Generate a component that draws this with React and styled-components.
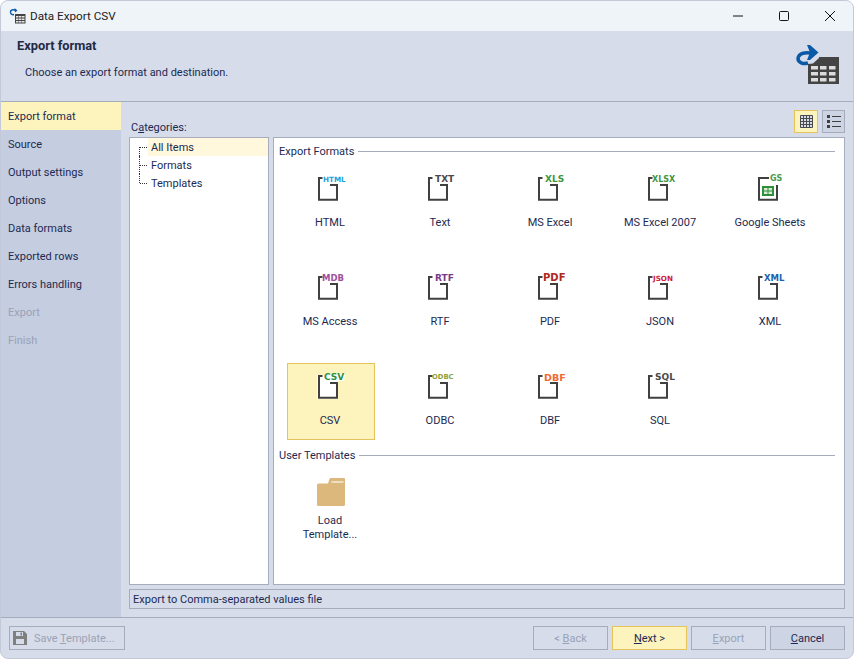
import React from "react";
import styled, { createGlobalStyle } from "styled-components";

const GlobalStyle = createGlobalStyle`
  html, body {
    margin: 0;
    padding: 0;
    background: #fff;
  }
  body {
    font-family: Roboto, "Open Sans", sans-serif;
    font-size: 11px;
    color: #1c2a52;
  }
  * { box-sizing: border-box; }
`;

const Window = styled.div`
  width: 854px;
  height: 659px;
  display: flex;
  flex-direction: column;
  border: 1px solid #c3c9d8;
  border-radius: 8px;
  overflow: hidden;
  background: #d6dce9;
`;

const TitleBar = styled.div`
  height: 30px;
  flex: none;
  display: flex;
  align-items: center;
  padding-left: 8px;
  background: #eff4f9;
  color: #222;
  font-size: 11.7px;
  gap: 4px;
`;

const TitleText = styled.span`
  flex: 1;
`;

const WinControls = styled.div`
  display: flex;
`;

const WinButton = styled.div`
  width: 46px;
  height: 30px;
  display: flex;
  align-items: center;
  justify-content: center;
`;

const Header = styled.div`
  height: 71px;
  flex: none;
  display: flex;
  justify-content: space-between;
  padding: 7px 14px 0 16px;
  border-bottom: 1px solid #a5adbd;
`;

const HeaderTitle = styled.div`
  font-weight: 700;
  font-size: 12.8px;
  line-height: 16px;
  color: #1f2a44;
`;

const HeaderDesc = styled.div`
  margin: 11px 0 0 8px;
  line-height: 16px;
`;

const HeaderIcon = styled.svg`
  margin-top: 7px;
`;

const Body = styled.div`
  flex: 1;
  display: flex;
  min-height: 0;
`;

const Nav = styled.div`
  width: 120px;
  flex: none;
  background: #c5cde0;
`;

const NavItem = styled.div`
  height: 28px;
  line-height: 28px;
  padding: 1px 0 0 7px;
  background: ${(p) => (p.$active ? "#fdf3bd" : "transparent")};
  color: ${(p) => (p.$disabled ? "#9aa2b6" : "#1c2a52")};
`;

const Content = styled.div`
  flex: 1;
  display: flex;
  flex-direction: column;
  padding: 8px;
  min-width: 0;
`;

const Toolbar = styled.div`
  height: 24px;
  flex: none;
  display: flex;
  align-items: flex-start;
  gap: 4px;
  margin-bottom: 3px;
`;

const CategoriesLabel = styled.span`
  flex: 1;
  align-self: flex-end;
  padding-left: 2px;
  line-height: 16px;
  margin-bottom: -2px;
`;

const ToggleButton = styled.div`
  width: ${(p) => (p.$active ? 24 : 23)}px;
  height: 23px;
  display: flex;
  align-items: center;
  justify-content: center;
  border: 1px solid ${(p) => (p.$active ? "#e6c35c" : "#a5adbd")};
  background: ${(p) => (p.$active ? "#fdf3bd" : "#cdd4e4")};
`;

const Panels = styled.div`
  flex: 1;
  display: flex;
  gap: 4px;
  min-height: 0;
`;

const TreeBox = styled.div`
  width: 140px;
  flex: none;
  background: #fff;
  border: 1px solid #a5adbd;
`;

const TreeRow = styled.div`
  height: 18px;
  display: flex;
  align-items: center;
  padding-left: 9px;
`;

const Connector = styled.span`
  position: relative;
  width: 9px;
  height: 18px;
  flex: none;

  &::before {
    content: "";
    position: absolute;
    left: 0;
    top: ${(p) => (p.$first ? "9px" : "0")};
    height: ${(p) => (p.$first || p.$last ? "9px" : "18px")};
    border-left: 1px dotted #333;
  }

  &::after {
    content: "";
    position: absolute;
    left: 1px;
    top: 9px;
    width: 7px;
    border-top: 1px dotted #333;
  }
`;

const TreeLabel = styled.span`
  flex: 1;
  height: 18px;
  line-height: 18px;
  padding: 1px 0 0 3px;
  background: ${(p) => (p.$active ? "#fff8dd" : "transparent")};
`;

const MainBox = styled.div`
  flex: 1;
  background: #fff;
  border: 1px solid #a5adbd;
  padding: 5px 9px 0 5px;
  min-width: 0;
`;

const SectionHead = styled.div`
  height: 16px;
  display: flex;
  align-items: center;
  gap: 4px;

  &::after {
    content: "";
    flex: 1;
    height: 1px;
    background: #a5adbd;
  }
`;

const SectionText = styled.span`
  line-height: 14px;
  margin-top: 2px;
`;

const FormatGrid = styled.div`
  display: grid;
  grid-template-columns: repeat(5, 88px);
  column-gap: 22px;
  row-gap: 22px;
  padding: 6px 0 7px 8px;
`;

const TemplateGrid = styled(FormatGrid)`
  padding-top: 3px;
`;

const Cell = styled.div`
  height: 77px;
  display: flex;
  flex-direction: column;
  align-items: center;
  padding-top: ${(p) => p.$top ?? 10}px;
  border: 1px solid ${(p) => (p.$selected ? "#e6c35c" : "transparent")};
  background: ${(p) => (p.$selected ? "#fdf3bd" : "transparent")};
`;

const CellLabel = styled.div`
  margin: 14px 2px 0 0;
  line-height: 14px;
  text-align: center;
  white-space: pre-line;
`;

const DocWrap = styled.div`
  position: relative;
  width: 28px;
  height: 26px;
  flex: none;
`;

const Badge = styled.span`
  position: absolute;
  top: ${(p) => p.$top ?? -2}px;
  left: ${(p) => p.$left}px;
  font-family: "DejaVu Sans", sans-serif;
  font-weight: 700;
  font-size: ${(p) => p.$size}px;
  line-height: 11px;
  color: ${(p) => p.$color};
  white-space: nowrap;
`;

const FolderSvg = styled.svg`
  flex: none;
  margin-bottom: -6px;
`;

const StatusBar = styled.div`
  height: 20px;
  flex: none;
  margin-top: 4px;
  padding-left: 3px;
  line-height: 20px;
  border: 1px solid #a5adbd;
`;

const Footer = styled.div`
  height: 41px;
  flex: none;
  display: flex;
  align-items: flex-start;
  gap: 4px;
  padding: 8px 8px 0 8px;
  border-top: 1px solid #a5adbd;
`;

const FooterButton = styled.div`
  width: ${(p) => p.$width || 75}px;
  height: 24px;
  display: flex;
  align-items: center;
  justify-content: ${(p) => (p.$leading ? "flex-start" : "center")};
  padding-left: ${(p) => (p.$leading ? 3 : 0)}px;
  gap: 7px;
  border: 1px solid ${(p) => (p.$primary ? "#e6c35c" : "#a5adbd")};
  background: ${(p) =>
    p.$primary ? "#fdf3bd" : p.$disabled ? "transparent" : "#cdd4e4"};
  color: ${(p) => (p.$disabled ? "#9aa2b6" : "#1c2a52")};
`;

const Spacer = styled.div`
  flex: 1;
`;

const DocIcon = ({ ext, color, size, left, top, halo }) => (
  <DocWrap>
    <svg width="28" height="26" viewBox="0 0 28 26">
      {halo && <path d="M0 1h7l1-3h20l-1 9h-6v18H0z" fill="#fff" />}
      <path
        d="M5.500 2H2v21.700h18V9h-7"
        fill="none"
        stroke="#404040"
        strokeWidth="2"
      />
    </svg>
    <Badge $left={left} $top={top} $size={size} $color={color}>
      {ext}
    </Badge>
  </DocWrap>
);

const SheetIcon = () => (
  <DocWrap>
    <svg width="28" height="26" viewBox="0 0 28 26">
      <path
        d="M12 2H2v21.700h18V9"
        fill="none"
        stroke="#404040"
        strokeWidth="2"
      />
      <path fill="#2f8f3a" d="M5 10h12v10H5z" />
      <path fill="#d8ecd8" d="M7 12h3.500v2.500H7zM11.500 12H15v2.500h-3.500zM7 15.500h3.500V18H7zM11.500 15.500H15V18h-3.500z" />
    </svg>
    <Badge $left={13} $top={-3} $size={8} $color="#4a9a4a">
      GS
    </Badge>
  </DocWrap>
);

const FolderIcon = () => (
  <FolderSvg width="28" height="28" viewBox="0 0 28 28">
    <path
      fill="#dcb87d"
      d="M1.500 5.500H11l1.500-4.500a1 1 0 0 1 1-1H27a1 1 0 0 1 1 1V26.500a1.500 1.500 0 0 1-1.500 1.500h-25A1.500 1.500 0 0 1 0 26.500V7a1.500 1.500 0 0 1 1.500-1.500z"
    />
    <path stroke="#f6ecd8" strokeWidth="1.500" d="M14.500 4h12" fill="none" />
  </FolderSvg>
);

const GridGlyph = () => (
  <svg width="13" height="13" viewBox="0 0 13 13">
    <path fill="#d6dce9" d="M0 0h13v13H0z" />
    <path
      fill="none"
      stroke="#4a4a4a"
      strokeWidth="1"
      d="M.5.500h12v12H.5zM.5 3.500h12M.5 6.500h12M.5 9.500h12M3.500.5v12M6.500.5v12M9.500.5v12"
    />
  </svg>
);

const ListGlyph = () => (
  <svg width="14" height="13" viewBox="0 0 14 13">
    <path
      fill="#404040"
      d="M0 0h3v3H0zM0 5h3v3H0zM0 10h3v3H0zM5 1h9v1H5zM5 6h9v1H5zM5 11h9v1H5z"
    />
  </svg>
);

const TableBadge = () => (
  <svg width="17" height="16" viewBox="0 0 17 16">
    <path
      d="M7 2.500C4 1 1 2 1.500 4.500 2 6.500 3.500 7 5 6.500"
      fill="none"
      stroke="#0a5aa8"
      strokeWidth="1.400"
    />
    <path fill="#0a5aa8" d="M5.500 0l3 2.500-2.500 2z" />
    <path fill="#444" d="M6 6h10.500v9.500H6z" />
    <path
      fill="#e8e8e8"
      d="M7 8h2.500v1.500H7zM10 8h2.500v1.500H10zM13 8h2.500v1.500H13zM7 10.500h2.500V12H7zM10 10.500h2.500V12H10zM13 10.500h2.500V12H13zM7 13h2.500v1.500H7zM10 13h2.500v1.500H10zM13 13h2.500v1.500H13z"
    />
  </svg>
);

const ExportTableIcon = () => (
  <HeaderIcon width="43" height="40" viewBox="0 0 43 40">
    <path
      d="M18 9C10 6.500 2.500 8 2 13.500 2 17.500 7 19.500 12 18"
      fill="none"
      stroke="#0a5aa8"
      strokeWidth="3.500"
    />
    <path fill="#0a5aa8" d="M11 0h3l8.500 7.500L14 15h-3l3-7.500z" />
    <path fill="#444" d="M12 19l5-.5 6-5.500v-1h20v27H12z" />
    <path
      fill="#dcdcdc"
      d="M15 21h7v3.500h-7zM24 21h6.500v3.500H24zM33 21h6.500v3.500H33zM15 27h7v3.500h-7zM24 27h6.500v3.500H24zM33 27h6.500v3.500H33zM15 33h7v3.500h-7zM24 33h6.500v3.500H24zM33 33h6.500v3.500H33z"
    />
  </HeaderIcon>
);

const navItems = [
  { label: "Export format", active: true },
  { label: "Source" },
  { label: "Output settings" },
  { label: "Options" },
  { label: "Data formats" },
  { label: "Exported rows" },
  { label: "Errors handling" },
  { label: "Export", disabled: true },
  { label: "Finish", disabled: true },
];

const formats = [
  { label: "HTML", ext: "HTML", color: "#1f9fdc", size: 7.2, left: 6 },
  { label: "Text", ext: "TXT", color: "#4a4a4a", size: 9, left: 8 },
  { label: "MS Excel", ext: "XLS", color: "#3f9645", size: 9, left: 8 },
  { label: "MS Excel 2007", ext: "XLSX", color: "#3f9645", size: 8, left: 5 },
  { label: "Google Sheets", sheet: true },
  { label: "MS Access", ext: "MDB", color: "#a0509a", size: 8.5, left: 5 },
  { label: "RTF", ext: "RTF", color: "#7a3a8c", size: 9, left: 8 },
  { label: "PDF", ext: "PDF", color: "#b0281c", size: 10, left: 6, top: -3 },
  { label: "JSON", ext: "JSON", color: "#d0203c", size: 7.2, left: 6 },
  { label: "XML", ext: "XML", color: "#1a62ae", size: 8.5, left: 7 },
  { label: "CSV", ext: "CSV", color: "#2f8f3a", size: 9, left: 7, selected: true },
  { label: "ODBC", ext: "ODBC", color: "#8f9f40", size: 6.8, left: 5 },
  { label: "DBF", ext: "DBF", color: "#f06a30", size: 9.5, left: 7 },
  { label: "SQL", ext: "SQL", color: "#4a4a4a", size: 9, left: 8 },
];

export default function App() {
  return (
    <>
      <GlobalStyle />
      <Window>
        <TitleBar>
          <TableBadge />
          <TitleText>Data Export CSV</TitleText>
          <WinControls>
            <WinButton>
              <svg width="10" height="10" viewBox="0 0 10 10">
                <path d="M0 5h10" stroke="#111" fill="none" />
              </svg>
            </WinButton>
            <WinButton>
              <svg width="10" height="10" viewBox="0 0 10 10">
                <rect x=".5" y=".5" width="9" height="9" rx="1" stroke="#111" fill="none" />
              </svg>
            </WinButton>
            <WinButton>
              <svg width="10" height="10" viewBox="0 0 10 10">
                <path d="M0 0l10 10M10 0L0 10" stroke="#111" fill="none" />
              </svg>
            </WinButton>
          </WinControls>
        </TitleBar>

        <Header>
          <div>
            <HeaderTitle>Export format</HeaderTitle>
            <HeaderDesc>Choose an export format and destination.</HeaderDesc>
          </div>
          <ExportTableIcon />
        </Header>

        <Body>
          <Nav>
            {navItems.map((item) => (
              <NavItem key={item.label} $active={item.active} $disabled={item.disabled}>
                {item.label}
              </NavItem>
            ))}
          </Nav>

          <Content>
            <Toolbar>
              <CategoriesLabel>
                C<u>a</u>tegories:
              </CategoriesLabel>
              <ToggleButton $active>
                <GridGlyph />
              </ToggleButton>
              <ToggleButton>
                <ListGlyph />
              </ToggleButton>
            </Toolbar>

            <Panels>
              <TreeBox>
                <TreeRow>
                  <Connector $first />
                  <TreeLabel $active>All Items</TreeLabel>
                </TreeRow>
                <TreeRow>
                  <Connector />
                  <TreeLabel>Formats</TreeLabel>
                </TreeRow>
                <TreeRow>
                  <Connector $last />
                  <TreeLabel>Templates</TreeLabel>
                </TreeRow>
              </TreeBox>

              <MainBox>
                <SectionHead>
                  <SectionText>Export Formats</SectionText>
                </SectionHead>
                <FormatGrid>
                  {formats.map((f) => (
                    <Cell key={f.label} $selected={f.selected}>
                      {f.sheet ? (
                        <SheetIcon />
                      ) : (
                        <DocIcon
                          ext={f.ext}
                          color={f.color}
                          size={f.size}
                          left={f.left}
                          top={f.top}
                          halo={f.selected}
                        />
                      )}
                      <CellLabel>{f.label}</CellLabel>
                    </Cell>
                  ))}
                </FormatGrid>
                <SectionHead>
                  <SectionText>User Templates</SectionText>
                </SectionHead>
                <TemplateGrid>
                  <Cell $top={11}>
                    <FolderIcon />
                    <CellLabel>{"Load\nTemplate..."}</CellLabel>
                  </Cell>
                </TemplateGrid>
              </MainBox>
            </Panels>

            <StatusBar>Export to Comma-separated values file</StatusBar>
          </Content>
        </Body>

        <Footer>
          <FooterButton $width={116} $disabled $leading>
            <svg width="14" height="14" viewBox="0 0 14 14">
              <path
                fill="#7f7f7f"
                d="M0 0h11l3 3v11H0zM3 1v4h7V1zM7.500 1.500h1.500v3H7.500zM3 8v5h8V8z"
                fillRule="evenodd"
              />
            </svg>
            <span>
              Save <u>T</u>emplate...
            </span>
          </FooterButton>
          <Spacer />
          <FooterButton $disabled>
            <span>
              &lt; <u>B</u>ack
            </span>
          </FooterButton>
          <FooterButton $primary>
            <span>
              <u>N</u>ext &gt;
            </span>
          </FooterButton>
          <FooterButton $disabled>
            <span>
              <u>E</u>xport
            </span>
          </FooterButton>
          <FooterButton>
            <span>
              <u>C</u>ancel
            </span>
          </FooterButton>
        </Footer>
      </Window>
    </>
  );
}
